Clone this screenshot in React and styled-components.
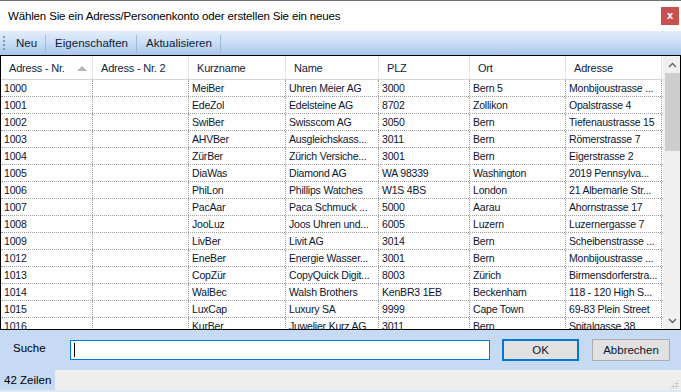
import React from 'react';
import styled, { createGlobalStyle } from 'styled-components';

const GlobalStyle = createGlobalStyle`
  html, body {
    margin: 0;
    padding: 0;
    background: #ffffff;
  }
  * {
    box-sizing: border-box;
  }
`;

const Window = styled.div`
  width: 681px;
  height: 392px;
  display: flex;
  flex-direction: column;
  font-family: "Liberation Sans", Arial, sans-serif;
  color: #000;
  overflow: hidden;
  border-top: 1px solid #6e6e6e;
  background: #ffffff;
`;

const TitleBar = styled.div`
  height: 30px;
  flex: 0 0 30px;
  display: flex;
  align-items: center;
  justify-content: space-between;
  padding: 0 2px 0 8px;
  font-size: 11.5px;
  letter-spacing: -0.15px;
  background: #ffffff;
`;

const CloseButton = styled.div`
  width: 18px;
  height: 18px;
  background: #c75050;
  color: #fff;
  font-size: 11px;
  font-weight: bold;
  display: flex;
  align-items: center;
  justify-content: center;
  line-height: 1;
  padding-bottom: 2px;
`;

const Toolbar = styled.div`
  height: 24px;
  flex: 0 0 24px;
  display: flex;
  align-items: center;
  padding-left: 3px;
  background: linear-gradient(to bottom, #e3edf9 0%, #cddff6 45%, #a9c6ee 100%);
  font-size: 11.5px;
  color: #0c1a33;
`;

const Gripper = styled.div`
  width: 2px;
  height: 16px;
  margin-right: 7px;
  background-image: radial-gradient(circle, #7d99c2 0.8px, transparent 1px);
  background-size: 2px 4px;
`;

const ToolButton = styled.div`
  padding: 0 8px 0 4px;
  height: 100%;
  display: flex;
  align-items: center;
`;

const ToolSeparator = styled.div`
  width: 1px;
  height: 17px;
  background: #f4f8fd;
  border-left: 1px solid #9fb8dc;
  margin: 0 5px 0 0;
`;

const GridFrame = styled.div`
  flex: 0 0 275px;
  display: flex;
  border: 1px solid #000;
  background: #ffffff;
  overflow: hidden;
`;

const TableArea = styled.div`
  flex: 1;
  min-width: 0;
  overflow: hidden;
  font-size: 10.5px;
  letter-spacing: -0.2px;
`;

const HeaderRow = styled.div`
  display: grid;
  grid-template-columns: 92px 96px 97px 93px 91px 96px 96px;
  height: 24px;
  border-bottom: 1px solid #d5d5d5;
`;

const HeaderCell = styled.div`
  position: relative;
  display: flex;
  align-items: center;
  padding-left: 8px;
  border-right: 1px solid #e5e5e5;
  color: #14223d;
  font-size: 11px;
  white-space: nowrap;
`;

const SortArrow = styled.span`
  position: absolute;
  right: 5px;
  top: 10px;
  width: 0;
  height: 0;
  border-left: 5px solid transparent;
  border-right: 5px solid transparent;
  border-bottom: 5px solid #b5b5b5;
`;

const Row = styled.div`
  display: grid;
  grid-template-columns: 92px 96px 97px 93px 91px 96px 96px;
  height: 17px;
  border-bottom: 1px dotted #a0a0a0;
`;

const Cell = styled.div`
  padding-left: 3px;
  border-right: 1px dotted #a0a0a0;
  line-height: 16px;
  white-space: nowrap;
  overflow: hidden;
  color: #0b1530;
`;

const ScrollBar = styled.div`
  flex: 0 0 17px;
  display: flex;
  flex-direction: column;
  align-items: center;
  background: #f0f0f0;
  border-left: 1px solid #f0f0f0;
`;

const ScrollArrow = styled.div`
  height: 17px;
  width: 100%;
  display: flex;
  align-items: center;
  justify-content: center;
`;

const ScrollThumb = styled.div`
  width: 15px;
  height: 78px;
  background: #cdcdcd;
`;

const ScrollTrack = styled.div`
  flex: 1;
`;

const SearchPanel = styled.div`
  flex: 0 0 40px;
  display: flex;
  align-items: center;
  padding: 0 11px 0 13px;
  background: #c6daf4;
  font-size: 11.5px;
`;

const SearchLabel = styled.div`
  width: 57px;
  margin-top: -5px;
`;

const SearchInput = styled.div`
  width: 420px;
  height: 20px;
  border: 1px solid #0078d7;
  background: #fff;
  display: flex;
  align-items: center;
  padding-left: 3px;
`;

const Caret = styled.div`
  width: 1px;
  height: 14px;
  background: #000;
`;

const DialogButton = styled.div`
  width: ${(p) => (p.$primary ? '77px' : '78px')};
  height: 22px;
  margin-left: ${(p) => (p.$primary ? '12px' : '13px')};
  background: #e1e1e1;
  border: ${(p) => (p.$primary ? '2px solid #0078d7' : '1px solid #adadad')};
  display: flex;
  align-items: center;
  justify-content: center;
  color: #0b1530;
`;

const StatusBar = styled.div`
  flex: 1;
  display: flex;
  align-items: stretch;
  justify-content: space-between;
  background: #eeeeee;
  border-bottom: 2px solid #dfe8f5;
  font-size: 11.5px;
`;

const StatusLabel = styled.div`
  display: flex;
  align-items: center;
  padding: 0 4px;
  background: #c6daf4;
`;

const ResizeGrip = styled.div`
  width: 10px;
  height: 10px;
  align-self: flex-end;
  margin: 0 2px 1px 0;
  background-image: radial-gradient(circle, #b8b8b8 0.9px, transparent 1.1px);
  background-size: 3px 3px;
  clip-path: polygon(100% 0, 100% 100%, 0 100%);
`;

const headers = ['Adress - Nr.', 'Adress - Nr. 2', 'Kurzname', 'Name', 'PLZ', 'Ort', 'Adresse'];

const rows = [
  ['1000', '', 'MeiBer', 'Uhren Meier AG', '3000', 'Bern 5', 'Monbijoustrasse ...'],
  ['1001', '', 'EdeZol', 'Edelsteine AG', '8702', 'Zollikon', 'Opalstrasse 4'],
  ['1002', '', 'SwiBer', 'Swisscom AG', '3050', 'Bern', 'Tiefenaustrasse 15'],
  ['1003', '', 'AHVBer', 'Ausgleichskass...', '3011', 'Bern', 'Römerstrasse 7'],
  ['1004', '', 'ZürBer', 'Zürich Versiche...', '3001', 'Bern', 'Eigerstrasse 2'],
  ['1005', '', 'DiaWas', 'Diamond AG', 'WA 98339', 'Washington', '2019 Pennsylva...'],
  ['1006', '', 'PhiLon', 'Phillips Watches', 'W1S 4BS', 'London', '21 Albemarle Str...'],
  ['1007', '', 'PacAar', 'Paca Schmuck ...', '5000', 'Aarau', 'Ahornstrasse 17'],
  ['1008', '', 'JooLuz', 'Joos Uhren und...', '6005', 'Luzern', 'Luzernergasse 7'],
  ['1009', '', 'LivBer', 'Livit AG', '3014', 'Bern', 'Scheibenstrasse ...'],
  ['1012', '', 'EneBer', 'Energie Wasser...', '3001', 'Bern', 'Monbijoustrasse ...'],
  ['1013', '', 'CopZür', 'CopyQuick Digit...', '8003', 'Zürich', 'Birmensdorferstra...'],
  ['1014', '', 'WalBec', 'Walsh Brothers', 'KenBR3 1EB', 'Beckenham', '118 - 120 High S...'],
  ['1015', '', 'LuxCap', 'Luxury SA', '9999', 'Cape Town', '69-83 Plein Street'],
  ['1016', '', 'KurBer', 'Juwelier Kurz AG', '3011', 'Bern', 'Spitalgasse 38'],
];

const Chevron = ({ up }) => (
  <svg width="9" height="6" viewBox="0 0 9 6">
    <path
      d={up ? 'M1 5 L4.5 1.5 L8 5' : 'M1 1 L4.5 4.5 L8 1'}
      fill="none"
      stroke="#606060"
      strokeWidth="1.4"
    />
  </svg>
);

const App = () => {
  return (
    <>
      <GlobalStyle />
      <Window>
        <TitleBar>
          <span>Wählen Sie ein Adress/Personenkonto oder erstellen Sie ein neues</span>
          <CloseButton>x</CloseButton>
        </TitleBar>

        <Toolbar>
          <Gripper />
          <ToolButton>Neu</ToolButton>
          <ToolSeparator />
          <ToolButton>Eigenschaften</ToolButton>
          <ToolSeparator />
          <ToolButton>Aktualisieren</ToolButton>
          <ToolSeparator />
        </Toolbar>

        <GridFrame>
          <TableArea>
            <HeaderRow>
              {headers.map((h, i) => (
                <HeaderCell key={h}>
                  {h}
                  {i === 0 && <SortArrow />}
                </HeaderCell>
              ))}
            </HeaderRow>
            {rows.map((r) => (
              <Row key={r[0]}>
                {r.map((c, i) => (
                  <Cell key={i}>{c}</Cell>
                ))}
              </Row>
            ))}
          </TableArea>
          <ScrollBar>
            <ScrollArrow>
              <Chevron up />
            </ScrollArrow>
            <ScrollThumb />
            <ScrollTrack />
            <ScrollArrow>
              <Chevron />
            </ScrollArrow>
          </ScrollBar>
        </GridFrame>

        <SearchPanel>
          <SearchLabel>Suche</SearchLabel>
          <SearchInput>
            <Caret />
          </SearchInput>
          <DialogButton $primary>OK</DialogButton>
          <DialogButton>Abbrechen</DialogButton>
        </SearchPanel>

        <StatusBar>
          <StatusLabel>42 Zeilen</StatusLabel>
          <ResizeGrip />
        </StatusBar>
      </Window>
    </>
  );
};

export default App;
